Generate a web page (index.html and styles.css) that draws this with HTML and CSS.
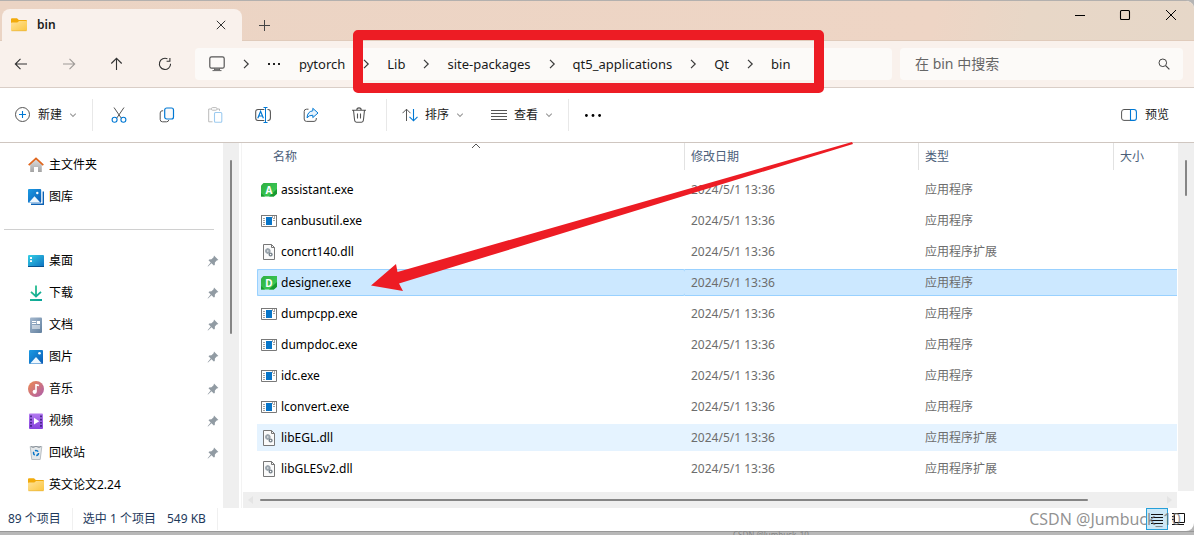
FILE: index.html
```html
<!DOCTYPE html>
<html lang="zh-CN">
<head>
<meta charset="utf-8">
<title>bin</title>
<link rel="stylesheet" href="styles.css">
</head>
<body>
<svg class="defs" aria-hidden="true">
  <defs>
    <linearGradient id="gFolder" x1="0" y1="0" x2="1" y2="1"><stop offset="0" stop-color="#ffe39a"/><stop offset="1" stop-color="#fbc640"/></linearGradient>
    <linearGradient id="gBlue" x1="0" y1="0" x2="1" y2="1"><stop offset="0" stop-color="#1b9be4"/><stop offset="1" stop-color="#0b5cb5"/></linearGradient>
    <linearGradient id="gDesk" x1="0" y1="0" x2="1" y2="1"><stop offset="0" stop-color="#35d0e6"/><stop offset="1" stop-color="#0c6fc0"/></linearGradient>
    <linearGradient id="gDoc" x1="0" y1="0" x2="1" y2="1"><stop offset="0" stop-color="#a5b9cf"/><stop offset="1" stop-color="#62809f"/></linearGradient>
    <linearGradient id="gMusic" x1="0" y1="0" x2="1" y2="1"><stop offset="0" stop-color="#ef8b50"/><stop offset="1" stop-color="#ab5cae"/></linearGradient>
    <linearGradient id="gVideo" x1="0" y1="0" x2="0" y2="1"><stop offset="0" stop-color="#b37af0"/><stop offset="1" stop-color="#8541dc"/></linearGradient>
    <linearGradient id="gHome" x1="0" y1="0" x2="0" y2="1"><stop offset="0" stop-color="#e2e2e2"/><stop offset="1" stop-color="#a2a2a2"/></linearGradient>
    <linearGradient id="gDown" x1="0" y1="0" x2="1" y2="1"><stop offset="0" stop-color="#31c58a"/><stop offset="1" stop-color="#08a39b"/></linearGradient>
    <linearGradient id="gQt" x1="0" y1="0" x2="1" y2="1"><stop offset="0" stop-color="#2fae42"/><stop offset="1" stop-color="#3fd05a"/></linearGradient>
  </defs>
  <symbol id="folder" viewBox="0 0 16 16"><path d="M0 2.2Q0 1.2 1 1.2H6L7.8 3H15Q16 3 16 4V7H0Z" fill="#f2ab0c"/><path d="M0 6Q0 5.6 .8 5.6H6.3L8.1 4H15.2Q16 4 16 4.8V13Q16 14 15 14H1Q0 14 0 13Z" fill="url(#gFolder)"/><path d="M.5 13.8H15.5" stroke="#dfa82f" stroke-width=".5"/></symbol>
  <symbol id="chev" viewBox="0 0 10 10"><path d="M3 .8 7.2 5 3 9.2" fill="none" stroke="#3a3a3a" stroke-width="1.2"/></symbol>
  <symbol id="down" viewBox="0 0 8 8"><path d="M1.2 2.6 4 5.4 6.8 2.6" fill="none" stroke="#9a9a9a" stroke-width="1.1"/></symbol>
  <symbol id="pin" viewBox="0 0 12 12"><path d="M7 .6 11.4 5 9.7 5.4 7.9 7.6 7.8 10 6.8 10.6 4.5 8.3 1 11.6.6 11.2 3.7 7.5 1.5 5.2 2.2 4.4 4.5 4.2 6.6 2.3Z" fill="#919ba3"/></symbol>
  <symbol id="qt" viewBox="0 0 16 16"><path d="M2.5 1H16V11.8L12.8 14.5H0V3.5Z" fill="url(#gQt)"/><path d="M0 11 4 14.5H0ZM16 7V11.8L12.8 14.5H8Z" fill="#179a31"/></symbol>
  <symbol id="exe" viewBox="0 0 16 16"><path d="M.5 2.5H15.5V13.5H.5Z" fill="#fff" stroke="#797979"/><path d="M0 2.5H16" stroke="#797979"/><path d="M5 4H11V12H5Z" fill="#0875c8"/><path d="M2 5.5H4M2 7.5H4M2 9.5H4M2 11.5H4M12 7.5H14M12 5.5H14" stroke="#888" stroke-width=".8"/><path d="M11 4H12M13 4H14" stroke="#555"/></symbol>
  <symbol id="dll" viewBox="0 0 16 16"><path d="M2.5.5H10.5L13.5 3.5V15.5H2.5Z" fill="#fafafa" stroke="#777"/><path d="M10.5.5V3.5H13.5" fill="none" stroke="#777"/><circle cx="6.8" cy="7" r="1.7" fill="none" stroke="#9ba5ad" stroke-width="1.9"/><path d="M6.8 4.2V5.4M6.8 8.6V9.8M4 7H5.2M8.4 7H9.6" stroke="#9ba5ad"/><circle cx="9.6" cy="10.5" r="1.4" fill="#fff" stroke="#76818a" stroke-width="1.4"/></symbol>
  <symbol id="picture" viewBox="0 0 16 16"><rect x="1" y="1" width="14" height="14" rx="1" fill="url(#gBlue)"/><path d="M2.2 14.5 8 8 13.8 14.5Z" fill="#eef8ff"/><circle cx="11.5" cy="4.3" r="1.3" fill="#fff"/></symbol>
</svg>

<main class="window">
  <header class="titlebar">
    <div class="tab">
      <svg class="i16"><use href="#folder"/></svg>
      <span class="tab-title">bin</span>
      <button class="bare" aria-label="关闭标签页"><svg class="i10" viewBox="0 0 10 10"><path d="M.8.8 9.2 9.2M9.2.8.8 9.2" stroke="#333"/></svg></button>
    </div>
    <button class="bare new-tab" aria-label="新标签页"><svg class="i12" viewBox="0 0 12 12"><path d="M6.500 1V12M1 6.500H12" stroke="#444"/></svg></button>
    <div class="caption">
      <button class="bare" aria-label="最小化"><svg class="i12" viewBox="0 0 12 12"><path d="M2 6.5H12" stroke="#000"/></svg></button>
      <button class="bare" aria-label="最大化"><svg class="i12" viewBox="0 0 12 12"><rect x="1.5" y="1.5" width="9" height="9" rx="1" fill="none" stroke="#000" stroke-width="1.1"/></svg></button>
      <button class="bare" aria-label="关闭"><svg class="i12" viewBox="0 0 12 12"><path d="M1 1 11 11M11 1 1 11" stroke="#000"/></svg></button>
    </div>
  </header>

  <nav class="navbar">
    <div class="nav-buttons">
      <button class="bare" aria-label="后退"><svg class="i16" viewBox="0 0 16 16"><path d="M2.5 8H14M7.5 2.8 2.3 8 7.5 13.2" class="ln"/></svg></button>
      <button class="bare dim" aria-label="前进"><svg class="i16" viewBox="0 0 16 16"><path d="M2 8H13.5M8.5 2.8 13.7 8 8.5 13.2" class="ln"/></svg></button>
      <button class="bare" aria-label="向上"><svg class="i16" viewBox="0 0 16 16"><path d="M7.5 2.5V14M2.3 7.5 7.5 2.3 12.7 7.5" class="ln"/></svg></button>
      <button class="bare" aria-label="刷新"><svg class="i16" viewBox="0 0 16 16"><path d="M10.4 2.8A5.6 5.6 0 1 0 13.6 7.8M9.6 5.2H12.9V2" class="ln"/></svg></button>
    </div>
    <div class="address">
      <svg class="i16" viewBox="0 0 16 16"><rect x=".8" y=".8" width="14.4" height="11.4" rx="1.8" fill="none" stroke="#555" stroke-width="1.2"/><path d="M5.5 12.3V14M10.5 12.3V14M3.5 14.6H12.5M6 13.4H10" stroke="#666"/></svg>
      <svg class="sep"><use href="#chev"/></svg>
      <button class="bare more" aria-label="更多位置"><svg class="i14" viewBox="0 0 14 14"><path d="M1 6H3V8H1ZM6 6H8V8H6ZM11 6H13V8H11Z" fill="#222"/></svg></button>
      <a href="#">pytorch</a><svg class="sep"><use href="#chev"/></svg>
      <a href="#">Lib</a><svg class="sep"><use href="#chev"/></svg>
      <a href="#">site-packages</a><svg class="sep"><use href="#chev"/></svg>
      <a href="#">qt5_applications</a><svg class="sep"><use href="#chev"/></svg>
      <a href="#">Qt</a><svg class="sep"><use href="#chev"/></svg>
      <a href="#">bin</a>
    </div>
    <label class="search">
      <input type="text" placeholder="在 bin 中搜索" aria-label="在 bin 中搜索">
      <svg class="i12" viewBox="0 0 12 12"><circle cx="4.8" cy="4.8" r="3.8" fill="none" stroke="#444"/><path d="M7.6 7.6 11.4 11.4" stroke="#444" stroke-width="1.2"/></svg>
    </label>
  </nav>

  <div class="toolbar">
    <button class="bare labelled"><svg class="i16" viewBox="0 0 16 16"><circle cx="7.5" cy="7.5" r="7" fill="none" stroke="#555"/><path d="M7.5 4V11M4 7.5H11" stroke="#0078d4" stroke-width="1.1"/></svg><span>新建</span><svg class="i8"><use href="#down"/></svg></button>
    <div class="group tools">
      <button class="bare" aria-label="剪切"><svg class="i16" viewBox="0 0 16 16"><path d="M3 .5 10.3 11.2M13 .5 5.700 11.2" stroke="#555" fill="none"/><circle cx="3.6" cy="12.8" r="2.5" fill="none" stroke="#0078d4" stroke-width="1.1"/><circle cx="12.4" cy="12.8" r="2.5" fill="none" stroke="#0078d4" stroke-width="1.1"/></svg></button>
      <button class="bare" aria-label="复制"><svg class="i16" viewBox="0 0 16 16"><path d="M4.2 3.8H3Q1.2 4 1.2 6V12.5Q1.2 14.8 3.5 14.8H7.5Q9.5 14.8 9.8 13" fill="none" stroke="#555"/><rect x="5.7" y="1" width="8.8" height="11" rx="2" fill="#fafafa" stroke="#0078d4" stroke-width="1.2"/></svg></button>
      <button class="bare" aria-label="粘贴"><svg class="i16" viewBox="0 0 16 16"><path d="M5 2H1.7V14.8H5.5M10 2H12.5V3.8" fill="none" stroke="#bbb"/><rect x="4.5" y=".6" width="5.4" height="2.6" rx="1" fill="#fff" stroke="#bbb"/><rect x="7.5" y="5.5" width="7.3" height="9.7" rx="1" fill="#fff" stroke="#9dcbf0" stroke-width="1.1"/></svg></button>
      <button class="bare" aria-label="重命名"><svg class="i16" viewBox="0 0 16 16"><path d="M9.3 2.5H3Q.7 2.5.7 5V11Q.7 13.5 3 13.5H9.3M12.5 2.5H13Q15.4 2.5 15.4 5V11Q15.4 13.5 13 13.5H12.5" fill="none" stroke="#555" stroke-width="1.1"/><path d="M2.8 11.2 5.6 4.3 8.4 11.2M3.7 9H7.5" fill="none" stroke="#0078d4" stroke-width="1.2"/><path d="M10.500 .5V15.500M8.5.5H12.500M8.500 15.5H12.500" stroke="#0078d4"/></svg></button>
      <button class="bare" aria-label="共享"><svg class="i16" viewBox="0 0 16 16"><path d="M5.5 2.2H3.5Q1.2 2.2 1.2 4.5V12Q1.2 14.4 3.5 14.4H11Q13.3 14.4 13.3 12V11" fill="none" stroke="#555"/><path d="M9.8 1.3 15 6 9.8 10.6V8.2Q6 8.2 4 10.8 4.5 4.4 9.8 3.8Z" fill="#e8f3fc" stroke="#0078d4" stroke-linejoin="round"/></svg></button>
      <button class="bare" aria-label="删除"><svg class="i16" viewBox="0 0 16 16"><path d="M1 3.2H15M5.8 3Q5.8.9 8 .9T10.2 3M2.5 3.2 3.6 13.3Q3.8 15.2 5.5 15.2H10.5Q12.2 15.2 12.4 13.3L13.5 3.2M6.5 6.5V11.5M9.5 6.5V11.5" fill="none" stroke="#555" stroke-width="1.1"/></svg></button>
    </div>
    <div class="group menus">
      <button class="bare labelled"><svg class="i16" viewBox="0 0 16 16"><path d="M4.5 14V2.2M.5 6.2 4.5 2.2 8.5 6.2" fill="none" stroke="#555"/><path d="M11.5 2V13.8M7.5 9.8 11.5 13.8 15.5 9.8" fill="none" stroke="#0078d4" stroke-width="1.1"/></svg><span>排序</span><svg class="i8"><use href="#down"/></svg></button>
      <button class="bare labelled"><svg class="i16" viewBox="0 0 16 16"><path d="M0 3.5H16M0 6.5H16M0 9.5H16M0 12.5H16" stroke="#555"/></svg><span>查看</span><svg class="i8"><use href="#down"/></svg></button>
    </div>
    <div class="group">
      <button class="bare dots" aria-label="更多"><svg class="i16" viewBox="0 0 16 16"><circle cx="1.4" cy="8.5" r="1.4"/><circle cx="8" cy="8.5" r="1.4"/><circle cx="14.6" cy="8.5" r="1.4"/></svg></button>
    </div>
    <button class="bare labelled preview"><svg class="i16" viewBox="0 0 16 16"><path d="M9.5 2.5H3Q.6 2.5.6 5V11Q.6 13.4 3 13.4H9.5" fill="none" stroke="#555"/><path d="M9.5 2.5H13Q15.4 2.5 15.4 5V11Q15.4 13.4 13 13.4H9.5Z" fill="none" stroke="#0078d4" stroke-width="1.1"/></svg><span>预览</span></button>
  </div>

  <div class="body">
    <aside class="sidebar">
      <div class="tree">
        <a href="#"><svg class="i16" viewBox="0 0 16 16"><path d="M2.2 6.5 8 1.5 13.8 6.5V15H10V10H6V15H2.2Z" fill="url(#gHome)"/><path d="M.7 8.2 8 1.3 15.3 8.2" fill="none" stroke="#e0661d" stroke-width="1.7"/></svg><span>主文件夹</span></a>
        <a href="#"><svg class="i16" viewBox="0 0 16 16"><path d="M3 15.3H15.3V2.5" fill="none" stroke="#0c62b5" stroke-width="1.4"/><rect width="13.2" height="13.7" rx="1" fill="url(#gBlue)"/><path d="M1 13.5 6.5 7.3 12.3 13.5Z" fill="#eff8ff"/><circle cx="9.3" cy="4" r="1.2" fill="#fff"/></svg><span>图库</span></a>
        <hr>
        <a href="#"><svg class="i16" viewBox="0 0 16 16"><rect y="2" width="16" height="12" rx="1" fill="url(#gDesk)"/><path d="M0 13.5H16" stroke="#08518e"/><path d="M2 4H4V6H2ZM2 7.300H4V9H2Z" fill="#fff"/></svg><span>桌面</span><svg class="i12"><use href="#pin"/></svg></a>
        <a href="#"><svg class="i16" viewBox="0 0 16 16"><path d="M8 .5V11M3 6.8 8 11.5 13 6.8M2 15H14" fill="none" stroke="url(#gDown)" stroke-width="1.8"/></svg><span>下载</span><svg class="i12"><use href="#pin"/></svg></a>
        <a href="#"><svg class="i16" viewBox="0 0 16 16"><rect x="2" y=".5" width="12" height="15.5" rx="1" fill="url(#gDoc)"/><path d="M4 4.5H8M4 6.5H8M4 9H12M4 11H12" stroke="#fff" stroke-width="1.1"/><path d="M8.8 4H12V7H8.8Z" fill="#fff"/></svg><span>文档</span><svg class="i12"><use href="#pin"/></svg></a>
        <a href="#"><svg class="i16"><use href="#picture"/></svg><span>图片</span><svg class="i12"><use href="#pin"/></svg></a>
        <a href="#"><svg class="i16" viewBox="0 0 16 16"><circle cx="8" cy="8" r="8" fill="url(#gMusic)"/><path d="M8 3V10.5M8 3.8 11 4.6" stroke="#fff" stroke-width="1.6"/><circle cx="6.7" cy="10.8" r="2.1" fill="#fff"/></svg><span>音乐</span><svg class="i12"><use href="#pin"/></svg></a>
        <a href="#"><svg class="i16" viewBox="0 0 16 16"><rect x="1" y=".5" width="14" height="15.5" rx="1" fill="url(#gVideo)"/><path d="M3 2.5V14.5M13 2.5V14.5" stroke="#3c1f7c" stroke-width="1.7" stroke-dasharray="1.7 1.5"/><path d="M6 4.8V11.5L11.3 8.2Z" fill="#fff"/></svg><span>视频</span><svg class="i12"><use href="#pin"/></svg></a>
        <a href="#"><svg class="i16" viewBox="0 0 16 16"><path d="M2.2 1.5H13.8L12.2 14.5H3.8Z" fill="#e5e8ea" stroke="#b8bec3"/><path d="M3 1.5 5 2.5 8 1.3 11 2.5 13 1.5" stroke="#8d959c" fill="none"/><circle cx="8" cy="8" r="2.5" fill="none" stroke="#0875c8" stroke-width="1.5" stroke-dasharray="3.6 1.6"/></svg><span>回收站</span><svg class="i12"><use href="#pin"/></svg></a>
        <a href="#"><svg class="i16"><use href="#folder"/></svg><span>英文论文2.24</span></a>
      </div>
      <div class="vscroll side-scroll"><div class="thumb"></div></div>
    </aside>

    <section class="files">
      <div class="list">
        <table>
          <colgroup><col class="c-name"><col class="c-date"><col class="c-type"><col></colgroup>
          <thead><tr><th><div>名称<svg class="sort" viewBox="0 0 10 6"><path d="M1 5 5 1 9 5" fill="none" stroke="#555"/></svg></div></th><th><div>修改日期</div></th><th><div>类型</div></th><th><div>大小</div></th></tr></thead>
          <tbody>
            <tr><td><span class="file"><span class="qt"><svg class="i16"><use href="#qt"/></svg><b>A</b></span>assistant.exe</span></td><td>2024/5/1 13:36</td><td>应用程序</td><td></td></tr>
            <tr><td><span class="file"><svg class="i16"><use href="#exe"/></svg>canbusutil.exe</span></td><td>2024/5/1 13:36</td><td>应用程序</td><td></td></tr>
            <tr><td><span class="file"><svg class="i16"><use href="#dll"/></svg>concrt140.dll</span></td><td>2024/5/1 13:36</td><td>应用程序扩展</td><td></td></tr>
            <tr class="selected"><td><span class="file"><span class="qt"><svg class="i16"><use href="#qt"/></svg><b>D</b></span>designer.exe</span></td><td>2024/5/1 13:36</td><td>应用程序</td><td></td></tr>
            <tr><td><span class="file"><svg class="i16"><use href="#exe"/></svg>dumpcpp.exe</span></td><td>2024/5/1 13:36</td><td>应用程序</td><td></td></tr>
            <tr><td><span class="file"><svg class="i16"><use href="#exe"/></svg>dumpdoc.exe</span></td><td>2024/5/1 13:36</td><td>应用程序</td><td></td></tr>
            <tr><td><span class="file"><svg class="i16"><use href="#exe"/></svg>idc.exe</span></td><td>2024/5/1 13:36</td><td>应用程序</td><td></td></tr>
            <tr><td><span class="file"><svg class="i16"><use href="#exe"/></svg>lconvert.exe</span></td><td>2024/5/1 13:36</td><td>应用程序</td><td></td></tr>
            <tr class="hover"><td><span class="file"><svg class="i16"><use href="#dll"/></svg>libEGL.dll</span></td><td>2024/5/1 13:36</td><td>应用程序扩展</td><td></td></tr>
            <tr><td><span class="file"><svg class="i16"><use href="#dll"/></svg>libGLESv2.dll</span></td><td>2024/5/1 13:36</td><td>应用程序扩展</td><td></td></tr>
          </tbody>
        </table>
        <div class="hscroll"><svg class="i8" viewBox="0 0 8 8"><path d="M6 0V8L1 4Z" fill="#e4e4e4"/></svg><div class="track"><div class="thumb"></div></div><svg class="i8" viewBox="0 0 8 8"><path d="M2 0V8L7 4Z" fill="#e4e4e4"/></svg></div>
      </div>
      <div class="vscroll file-scroll"><div class="thumb"></div></div>
    </section>
  </div>

  <footer class="status">
    <span class="count">89 个项目</span>
    <span class="selection"><span>选中 1 个项目</span><span>549 KB</span></span>
    <div class="views">
      <button class="bare active" aria-label="详细信息"><svg class="i14" viewBox="0 0 14 14"><path d="M1 2.5H13M1 5.5H13M1 8.5H13M1 11.5H13" stroke="#111"/></svg></button>
      <button class="bare" aria-label="大缩略图"><svg class="i14" viewBox="0 0 14 14"><path d="M3.5 1.5H13.5V10.5H3.5ZM1 1.5H3M1 4.5H3M1 7.5H3M1 12.5H13" fill="none" stroke="#111"/></svg></button>
    </div>
    <span class="watermark">CSDN @Jumbuck_10</span>
  </footer>
</main>
<div class="backdrop"><span>CSDN @Jumbuck_10</span></div>

<div class="mark-box"></div>
<svg class="mark-arrow" viewBox="0 0 484 150"><path d="M1 143.500 26 122 27.500 130 482 0 483 2 29 141.500 33 149Z" fill="#ed1c24"/></svg>
</body>
</html>
```
FILE: styles.css
```css
* { box-sizing: border-box; }
body {
  margin: 0;
  height: 100vh;
  display: flex;
  flex-direction: column;
  overflow: hidden;
  position: relative;
  background: #b5b5b5;
  color: #1a1a1a;
  font: 12px/16px "Noto Sans", "Noto Sans CJK SC", sans-serif;
}
a { color: inherit; text-decoration: none; }
svg { display: block; flex: none; }
.defs { position: absolute; width: 0; height: 0; }
.i8 { width: 8px; height: 8px; }
.i10 { width: 10px; height: 10px; }
.i12 { width: 12px; height: 12px; }
.i14 { width: 14px; height: 14px; }
.i16 { width: 16px; height: 16px; }
.bare {
  display: flex;
  align-items: center;
  justify-content: center;
  padding: 0;
  border: 0;
  background: none;
  color: inherit;
  font: inherit;
}
.ln { fill: none; stroke: #333; stroke-width: 1.1; }
.dim { opacity: .45; }

.window {
  flex: none;
  background: #fff;
  border-top: 1px solid #b3b0ae;
  border-radius: 0 8px 8px 0;
  overflow: hidden;
}

.titlebar {
  display: flex;
  height: 40px;
  padding-left: 2px;
  background: linear-gradient(100deg, #ebd4c4 0%, #eed5c5 78%, #e8d7c7 86%, #e6d7c8 100%);
  box-shadow: inset 0 -1px #e0cbbb;
}
.tab {
  display: flex;
  align-items: center;
  width: 240px;
  margin-top: 8px;
  padding: 0 16px 0 9px;
  gap: 10px;
  border-radius: 8px 8px 0 0;
  background: #f9f1ec;
}
.tab-title { flex: 1; font-weight: 600; }
.new-tab { width: 44px; margin-top: 8px; }
.caption { display: flex; height: 28px; margin-left: auto; }
.caption .bare { width: 46px; }

.navbar {
  display: flex;
  align-items: center;
  height: 47px;
  padding: 0 11px 0 3px;
  background: #f9f1ec;
  border-bottom: 1px solid #d9cec7;
}
.nav-buttons { display: flex; gap: 12px; width: 192px; }
.nav-buttons .bare { width: 36px; height: 32px; }
.address, .search { height: 32px; border-radius: 4px; background: #fcfaf8; }
.address {
  display: flex;
  align-items: center;
  flex: 1;
  padding-left: 14px;
  font-size: 13px;
}
.sep { width: 42px; height: 10px; }
.more { margin-right: 18px; }
.search {
  display: flex;
  align-items: center;
  width: 283px;
  margin-left: 8px;
  padding: 0 13px 0 15px;
}
.search input {
  flex: 1;
  min-width: 0;
  padding: 0;
  border: 0;
  outline: 0;
  background: none;
  font: 14px/20px "Noto Sans", "Noto Sans CJK SC", sans-serif;
}
.search input::placeholder { color: #666; opacity: 1; }

.toolbar {
  display: flex;
  align-items: center;
  height: 55px;
  padding: 0 25px 0 15px;
  border-bottom: 1px solid #cfc6c0;
}
.labelled { gap: 7px; }
.group {
  display: flex;
  align-items: center;
  height: 32px;
  border-left: 1px solid #e8e8e8;
}
.tools { gap: 32px; margin-left: 15px; padding: 0 19px 0 18px; }
.menus { gap: 27px; padding: 0 15px; }
.dots { padding-left: 16px; }
.preview { margin-left: auto; gap: 8px; }

.body { display: flex; }
.sidebar { display: flex; flex: none; width: 242px; border-right: 1px solid #f3f3f3; }
.tree { flex: 1; padding-top: 6px; color: #000; }
.tree a {
  display: flex;
  align-items: center;
  height: 32px;
  padding: 0 4px 0 28px;
  gap: 5px;
}
.tree a span { flex: 1; }
.tree hr {
  height: 1px;
  margin: 16px 9px 15px 4px;
  border: 0;
  background: #d0d0d0;
}
.vscroll { flex: none; width: 16px; background: #efefef; }
.vscroll .thumb { width: 2px; margin: 17px 0 0 7px; border-radius: 1px; background: #858585; }
.side-scroll { margin-right: 2px; }
.side-scroll .thumb { height: 174px; }
.file-scroll { margin-bottom: 17px; }
.file-scroll .thumb { height: 36px; }

.files { display: flex; flex: 1; min-width: 0; }
.list { flex: 1; min-width: 0; padding: 0 1px; }
table {
  width: calc(100% - 14px);
  margin: 0 0 8px 14px;
  table-layout: fixed;
  border-collapse: separate;
  border-spacing: 0;
}
.c-name { width: 428px; }
.c-date { width: 234px; }
.c-type { width: 195px; }
th {
  height: 31px;
  padding: 0 0 4px;
  color: #4c607a;
  font-weight: 400;
  text-align: left;
}
th div {
  height: 27px;
  padding-left: 6px;
  border-right: 1px solid #e2e2e2;
  line-height: 27px;
}
th:first-child div { position: relative; padding-left: 16px; }
th:last-child div { border: 0; }
.sort { position: absolute; top: 0; left: 50%; width: 10px; height: 6px; }
td {
  height: 31px;
  padding: 0 0 0 6px;
  border: solid transparent;
  border-width: 2px 0;
  background-clip: padding-box;
  color: #6d6d6d;
  white-space: nowrap;
}
td:first-child { padding-left: 4px; border-radius: 2px; color: #000; }
.file { display: flex; align-items: center; gap: 4px; }
.selected td { background-color: #cce8ff; box-shadow: inset 0 1px #99d1ff, inset 0 -1px #99d1ff; }
.selected td:first-child { box-shadow: inset 0 1px #99d1ff, inset 0 -1px #99d1ff, inset 1px 0 #99d1ff; }
.hover td { background-color: #e5f3ff; }
.qt { position: relative; }
.qt b {
  position: absolute;
  inset: 0;
  color: #fff;
  font-size: 10px;
  text-align: center;
}
.hscroll {
  display: flex;
  align-items: center;
  height: 16px;
  padding: 0 4px;
  gap: 5px;
  background: #efefef;
}
.track { flex: 1; }
.track .thumb { width: 92%; height: 2px; border-radius: 1px; background: #858585; }

.status {
  display: flex;
  position: relative;
  height: 23px;
  padding: 0 6px 0 8px;
  color: #1e395b;
  line-height: 22px;
}
.count { padding-right: 11px; }
.selection { display: flex; gap: 11px; padding: 0 11px 0 10px; }
.count, .selection { height: 22px; border-right: 1px solid #f0f0f0; }
.views { display: flex; margin-left: auto; }
.views .bare { width: 20px; height: 22px; }
.views .active { width: 22px; border: 1px solid #26a0da; background: #cce8f6; }
.watermark {
  position: absolute;
  right: 13px;
  top: 0;
  color: rgba(110, 110, 110, .75);
  font-size: 16px;
}
.backdrop {
  flex: 1;
  min-height: 0;
  overflow: hidden;
  padding-left: 733px;
  background: linear-gradient(#989898 1px, #b8b8b8 1px);
  color: #858585;
  font-size: 8px;
  line-height: 8px;
}

.mark-box {
  position: absolute;
  left: 353px;
  top: 30px;
  width: 471px;
  height: 63px;
  border: 10px solid #ed1c24;
  border-radius: 5px;
}
.mark-arrow {
  position: absolute;
  left: 370px;
  top: 142px;
  width: 484px;
  height: 150px;
}
```
